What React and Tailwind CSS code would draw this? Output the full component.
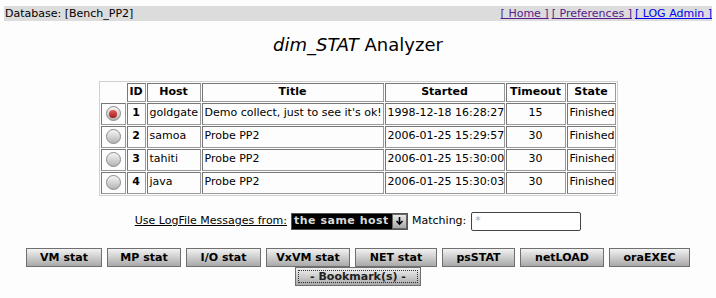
import React from 'react';

const runs = [
  { id: 1, host: 'goldgate', title: "Demo collect, just to see it's ok!", started: '1998-12-18 16:28:27', timeout: 15, checked: true },
  { id: 2, host: 'samoa', title: 'Probe PP2', started: '2006-01-25 15:29:57', timeout: 30 },
  { id: 3, host: 'tahiti', title: 'Probe PP2', started: '2006-01-25 15:30:00', timeout: 30 },
  { id: 4, host: 'java', title: 'Probe PP2', started: '2006-01-25 15:30:03', timeout: 30 },
];

const tools = ['VM stat', 'MP stat', 'I/O stat', 'VxVM stat', 'NET stat', 'psSTAT', 'netLOAD', 'oraEXEC'];
const toolWidths = ['w-[76px]', 'w-[74px]', 'w-[75px]', 'w-[84px]', 'w-[82px]', 'w-[73px]', 'w-[84px]', 'w-[81px]'];

function Radio({ checked }) {
  return (
    <span className="inline-flex h-[15px] w-[15px] items-center justify-center rounded-full border border-[#8a8a8a] bg-gradient-to-b from-[#f6f6f6] to-[#b4b4b4]">
      {checked && <span className="h-[8px] w-[8px] rounded-full bg-gradient-to-b from-[#e46060] to-[#a01818]" />}
    </span>
  );
}

const cell = 'border border-t-[#777] border-l-[#777] border-b-[#999] border-r-[#999] px-[2px]';

function App() {
  return (
    <div className="min-h-screen bg-[#fdfdfd] font-['DejaVu_Sans',sans-serif] text-[11px] text-black">
      <div className="px-[4px] pt-[6px]">
        <div className="flex h-[15px] items-center justify-between bg-[#dcdcdc] pl-[1px] leading-[15px]">
          <span>Database: [Bench_PP2]</span>
          <span className="flex gap-[3px]">
            <a className="text-[#551a8b] underline">[ Home ]</a>
            <a className="text-[#551a8b] underline">[ Preferences ]</a>
            <a className="text-[#0000ee] underline">[ LOG Admin ]</a>
          </span>
        </div>
      </div>

      <h1 className="mt-[12px] text-center text-[18px] leading-[24px] font-normal">
        <i>dim_STAT</i> Analyzer
      </h1>

      <div className="mt-[24px] flex justify-center">
        <table className="border-separate border-spacing-[1px] border border-[#d0d0d0] table-fixed w-[519px]">
          <thead>
            <tr className="font-bold">
              <th className="w-[25px] h-[18px]" />
              <th className={cell + ' h-[18px] w-[19px] text-center'}>ID</th>
              <th className={cell + ' h-[18px] w-[54px] text-center'}>Host</th>
              <th className={cell + ' h-[18px] w-[182px] text-center'}>Title</th>
              <th className={cell + ' h-[18px] w-[120px] text-center'}>Started</th>
              <th className={cell + ' h-[18px] w-[60px] text-center'}>Timeout</th>
              <th className={cell + ' h-[18px] text-center'}>State</th>
            </tr>
          </thead>
          <tbody>
            {runs.map((r) => (
              <tr key={r.id}>
                <td className={cell + ' h-[22px] text-center'}>
                  <span className="flex justify-center"><Radio checked={r.checked} /></span>
                </td>
                <td className={cell + ' h-[22px] text-center font-bold'}>{r.id}</td>
                <td className={cell + ' h-[22px] whitespace-nowrap'}>{r.host}</td>
                <td className={cell + ' h-[22px] whitespace-nowrap overflow-hidden'}>{r.title}</td>
                <td className={cell + ' h-[22px] whitespace-nowrap'}>{r.started}</td>
                <td className={cell + ' h-[22px] text-center'}>{r.timeout}</td>
                <td className={cell + ' h-[22px]'}>Finished</td>
              </tr>
            ))}
          </tbody>
        </table>
      </div>

      <div className="mt-[16px] flex items-center justify-center gap-[4px]">
        <span className="underline">Use LogFile Messages from:</span>
        <span className="flex h-[17px] w-[117px] items-center justify-between border border-[#555] bg-black pl-[2px] text-[11px] font-bold tracking-[0.5px] text-[#d8d8d8]">
          <span>the same host</span>
          <span className="flex h-[15px] w-[15px] items-center justify-center border border-[#666] bg-gradient-to-b from-[#e8e8e8] to-[#a8a8a8] leading-none">
            <svg width="9" height="10" viewBox="0 0 9 10"><path d="M4.5 1v7M1.5 5l3 3 3-3" stroke="#000" strokeWidth="1.6" fill="none" /></svg>
          </span>
        </span>
        <span>Matching:</span>
        <span className="ml-[1px] flex h-[19px] w-[110px] items-center rounded-[2px] border border-[#444] bg-white pl-[3px] text-[#aaa]">*</span>
      </div>

      <div className="mt-[17px] flex flex-col items-center">
        <div className="flex gap-[5px]">
          {tools.map((t, i) => (
            <button
              key={t}
              className={toolWidths[i] + ' h-[19px] border border-[#6f6f6f] bg-gradient-to-b from-[#f2f2f2] to-[#a9a9a9] text-[11px] font-bold leading-none text-black'}
            >
              {t}
            </button>
          ))}
        </div>
        <button className="h-[19px] w-[126px] border border-[#6f6f6f] bg-gradient-to-b from-[#f2f2f2] to-[#a9a9a9] p-[2px] text-[11px] font-bold leading-none text-[#222]">
          <span className="flex h-full items-center justify-center border border-dotted border-[#333]">- Bookmark(s) -</span>
        </button>
      </div>
    </div>
  );
}

export default App;
